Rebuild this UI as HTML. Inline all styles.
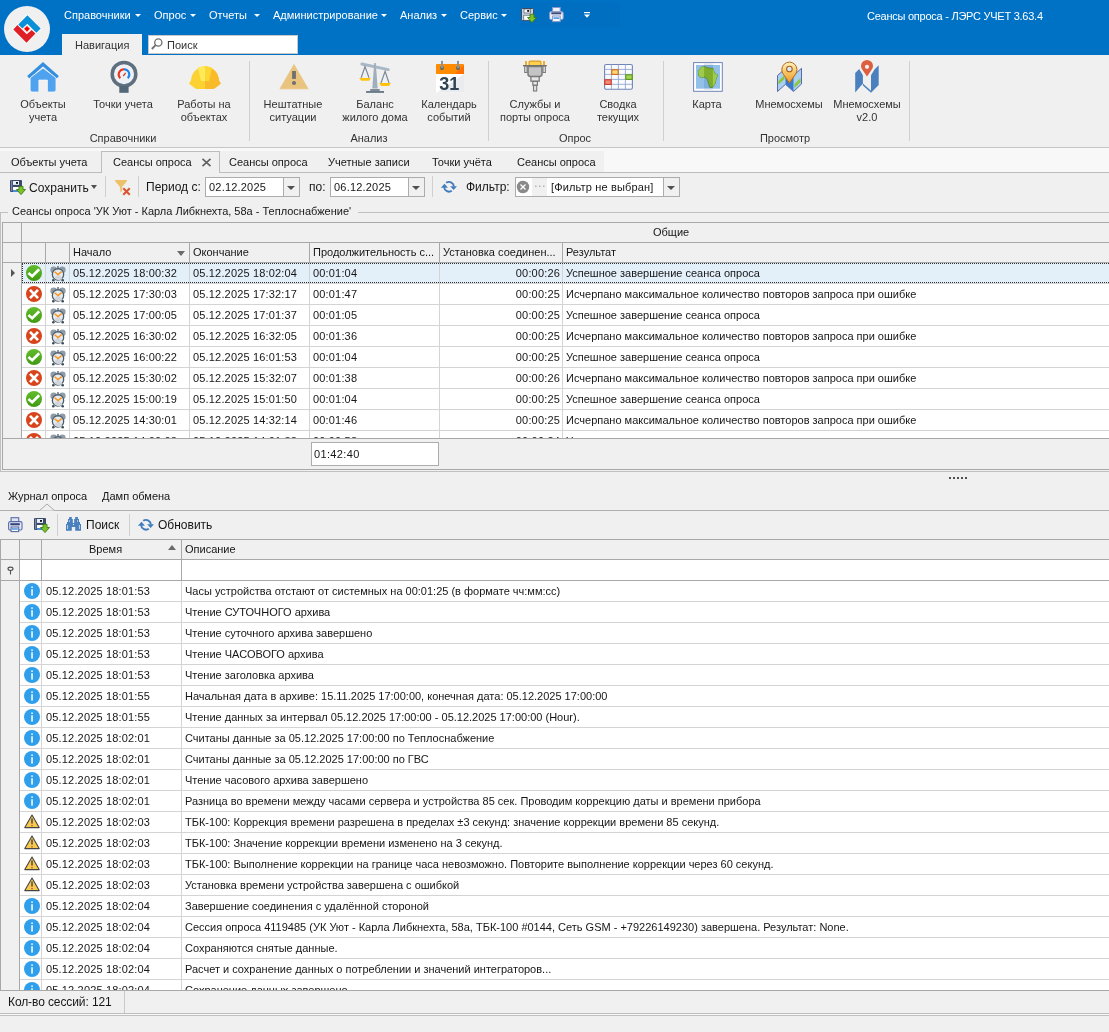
<!DOCTYPE html><html><head><meta charset="utf-8"><style>
*{margin:0;padding:0;box-sizing:border-box}
html,body{width:1109px;height:1032px;overflow:hidden;background:#f0f0f0;font-family:"Liberation Sans",sans-serif;font-size:11px;color:#161616}
.a{position:absolute}
.t{position:absolute;white-space:nowrap;line-height:13px}
.dg{letter-spacing:0.17px}
.mn{color:#fff;top:9px}
.ar{position:absolute;width:0;height:0;border-left:3px solid transparent;border-right:3px solid transparent;border-top:3px solid #fff}
.ard{position:absolute;width:0;height:0;border-left:4px solid transparent;border-right:4px solid transparent;border-top:4px solid #505050}
.rb{text-align:center;color:#333}
.sep{position:absolute;width:1px;background:#d0d0d0}
.hl{position:absolute;height:1px}
.vl{position:absolute;width:1px}
.ic{position:absolute}
</style></head><body><div id="root" style="position:absolute;left:0;top:0;width:1109px;height:1032px;will-change:transform">
<div class="a" style="left:0;top:0;width:1109px;height:55px;background:#0072c6"></div>
<div class="a" style="left:520px;top:2px;width:100px;height:25px;background:#006fc1"></div>
<div class="a" style="left:4px;top:6px;width:46px;height:46px;border-radius:50%;background:#f0f0f0"></div>
<svg class="a" style="left:0;top:0" width="60" height="60" viewBox="0 0 60 60">
<polygon points="18.3,24.4 27.4,15.2 40.7,28.5 36.3,32.8 27.3,23.8 22.4,28.5" fill="#fff" stroke="#fff" stroke-width="1.6" stroke-linejoin="round"/>
<polygon points="13.3,29.4 26.5,42.7 35.5,33.4 31.7,29.9 26.7,34.3 17.4,25" fill="#fff" stroke="#fff" stroke-width="1.6" stroke-linejoin="round"/>
<polygon points="18.3,24.4 27.4,15.2 40.7,28.5 36.3,32.8 27.3,23.8 22.4,28.5" fill="#0a90d6"/>
<polygon points="13.3,29.4 26.5,42.7 35.5,33.4 31.7,29.9 26.7,34.3 17.4,25" fill="#e01e26"/>
<polygon points="27,25.9 29.9,28.8 27,31.7 24.1,28.8" fill="#f00"/>
</svg>
<div class="t mn" style="left:64px">Справочники</div><div class="ar" style="left:135px;top:14px"></div>
<div class="t mn" style="left:154px">Опрос</div><div class="ar" style="left:190px;top:14px"></div>
<div class="t mn" style="left:209px">Отчеты</div><div class="ar" style="left:254px;top:14px"></div>
<div class="t mn" style="left:273px">Администрирование</div><div class="ar" style="left:381px;top:14px"></div>
<div class="t mn" style="left:400px">Анализ</div><div class="ar" style="left:441px;top:14px"></div>
<div class="t mn" style="left:460px">Сервис</div><div class="ar" style="left:501px;top:14px"></div>
<div class="t mn" style="left:867px;top:10px;letter-spacing:-0.25px">Сеансы опроса - ЛЭРС УЧЕТ 3.63.4</div>
<div class="a" style="left:62px;top:34px;width:80px;height:21px;background:#f0f0f0"></div>
<div class="t" style="left:75px;top:39px;color:#333">Навигация</div>
<div class="a" style="left:148px;top:35px;width:150px;height:19px;background:#fff;border:1px solid #c8c8c8"></div>
<div class="t" style="left:167px;top:39px;color:#333">Поиск</div>
<div class="t rb" style="left:-2px;top:98px;width:90px">Объекты<br>учета</div>
<div class="t rb" style="left:78px;top:98px;width:90px">Точки учета</div>
<div class="t rb" style="left:159px;top:98px;width:90px">Работы на<br>объектах</div>
<div class="t rb" style="left:248px;top:98px;width:90px">Нештатные<br>ситуации</div>
<div class="t rb" style="left:330px;top:98px;width:90px">Баланс<br>жилого дома</div>
<div class="t rb" style="left:404px;top:98px;width:90px">Календарь<br>событий</div>
<div class="t rb" style="left:490px;top:98px;width:90px">Службы и<br>порты опроса</div>
<div class="t rb" style="left:573px;top:98px;width:90px">Сводка<br>текущих</div>
<div class="t rb" style="left:662px;top:98px;width:90px">Карта</div>
<div class="t rb" style="left:744px;top:98px;width:90px">Мнемосхемы</div>
<div class="t rb" style="left:822px;top:98px;width:90px">Мнемосхемы<br>v2.0</div>
<div class="t rb" style="left:78px;top:132px;width:90px">Справочники</div>
<div class="t rb" style="left:324px;top:132px;width:90px">Анализ</div>
<div class="t rb" style="left:530px;top:132px;width:90px">Опрос</div>
<div class="t rb" style="left:740px;top:132px;width:90px">Просмотр</div>
<div class="sep" style="left:249px;top:61px;height:80px"></div>
<div class="sep" style="left:488px;top:61px;height:80px"></div>
<div class="sep" style="left:663px;top:61px;height:80px"></div>
<div class="sep" style="left:909px;top:61px;height:80px"></div>
<div class="hl" style="left:0;top:147px;width:1109px;background:#c6c6c6"></div>
<div class="a" style="left:0;top:148px;width:1109px;height:24px;background:#f8f8f8"></div>
<div class="a" style="left:0;top:151px;width:604px;height:21px;background:#f0f0f0"></div>
<div class="hl" style="left:0;top:172px;width:1109px;background:#bdbdbd"></div>
<div class="a" style="left:101px;top:151px;width:119px;height:22px;background:#f0f0f0;border:1px solid #bdbdbd;border-bottom:none"></div>
<div class="t" style="left:11px;top:156px">Объекты учета</div>
<div class="t" style="left:113px;top:156px">Сеансы опроса</div>
<div class="t" style="left:229px;top:156px">Сеансы опроса</div>
<div class="t" style="left:328px;top:156px">Учетные записи</div>
<div class="t" style="left:432px;top:156px">Точки учёта</div>
<div class="t" style="left:517px;top:156px">Сеансы опроса</div>
<svg class="ic" style="left:201px;top:158px" width="11" height="9"><path d="M1.5 0.8 L9.5 8.2 M9.5 0.8 L1.5 8.2" stroke="#606060" stroke-width="1.6"/></svg>
<div class="t" style="left:29px;top:182px;font-size:12px">Сохранить</div><div class="ard" style="left:91px;top:185px;border-width:4px 3px 0 3px"></div>
<div class="sep" style="left:105px;top:176px;height:21px"></div>
<div class="sep" style="left:138px;top:176px;height:21px"></div>
<div class="t" style="left:146px;top:181px;font-size:12px">Период с:</div>
<div class="a" style="left:205px;top:177px;width:95px;height:20px;background:#fff;border:1px solid #acacac"></div>
<div class="a" style="left:283px;top:178px;width:16px;height:18px;background:#f0f0f0;border-left:1px solid #acacac"></div>
<div class="ard" style="left:287px;top:186px"></div>
<div class="t" style="left:209px;top:181px;letter-spacing:0.2px">02.12.2025</div>
<div class="t" style="left:309px;top:181px;font-size:12px">по:</div>
<div class="a" style="left:330px;top:177px;width:95px;height:20px;background:#fff;border:1px solid #acacac"></div>
<div class="a" style="left:408px;top:178px;width:16px;height:18px;background:#f0f0f0;border-left:1px solid #acacac"></div>
<div class="ard" style="left:412px;top:186px"></div>
<div class="t" style="left:334px;top:181px;letter-spacing:0.2px">06.12.2025</div>
<div class="sep" style="left:432px;top:176px;height:21px"></div>
<div class="t" style="left:466px;top:181px;font-size:12px">Фильтр:</div>
<div class="a" style="left:515px;top:177px;width:165px;height:20px;background:#fff;border:1px solid #acacac"></div>
<div class="a" style="left:532px;top:178px;width:15px;height:18px;background:#f0f0f0"></div>
<div class="a" style="left:663px;top:178px;width:16px;height:18px;background:#f0f0f0;border-left:1px solid #acacac"></div>
<div class="ard" style="left:667px;top:186px"></div>
<div class="t" style="left:551px;top:181px;letter-spacing:0.15px">[Фильтр не выбран]</div>
<div class="a" style="left:0;top:212px;width:1109px;height:260px;border:1px solid #c0c0c0;border-right:none"></div>
<div class="a" style="left:8px;top:205px;width:350px;height:14px;background:#f0f0f0"></div>
<div class="t" style="left:12px;top:205px">Сеансы опроса 'УК Уют - Карла Либкнехта, 58а - Теплоснабжение'</div>
<div class="a" style="left:2px;top:222px;width:1107px;height:248px;border:1px solid #a8a8a8;border-right:none;background:#f0f0f0"></div>
<div class="hl" style="left:2px;top:242px;width:1107px;background:#a8a8a8"></div>
<div class="hl" style="left:2px;top:262px;width:1107px;background:#a8a8a8"></div>
<div class="vl" style="left:21px;top:222px;height:216px;background:#a8a8a8"></div>
<div class="vl" style="left:45px;top:242px;height:20px;background:#a8a8a8"></div>
<div class="vl" style="left:69px;top:242px;height:20px;background:#a8a8a8"></div>
<div class="vl" style="left:189px;top:242px;height:20px;background:#a8a8a8"></div>
<div class="vl" style="left:309px;top:242px;height:20px;background:#a8a8a8"></div>
<div class="vl" style="left:439px;top:242px;height:20px;background:#a8a8a8"></div>
<div class="vl" style="left:562px;top:242px;height:20px;background:#a8a8a8"></div>
<div class="t" style="left:653px;top:226px">Общие</div>
<div class="t" style="left:73px;top:246px">Начало</div>
<div class="t" style="left:193px;top:246px">Окончание</div>
<div class="t" style="left:313px;top:246px">Продолжительность с...</div>
<div class="t" style="left:443px;top:246px">Установка соединен...</div>
<div class="t" style="left:566px;top:246px">Результат</div>
<div class="ard" style="left:177px;top:251px;border-width:5px 4px 0 4px;border-top-color:#6a6a6a"></div>
<div class="a" style="left:22px;top:263px;width:1087px;height:175px;background:#fff"></div>
<div class="a" style="left:22px;top:263px;width:1087px;height:20px;background:#e3eff9"></div>
<div class="a" style="left:22px;top:263px;width:1087px;height:175px;overflow:hidden">
<div class="hl" style="left:0;top:20px;width:1087px;background:#d4d4d4"></div>
<div class="vl" style="left:23px;top:0px;height:20px;background:#d4d4d4"></div>
<div class="vl" style="left:47px;top:0px;height:20px;background:#d4d4d4"></div>
<div class="vl" style="left:167px;top:0px;height:20px;background:#d4d4d4"></div>
<div class="vl" style="left:287px;top:0px;height:20px;background:#d4d4d4"></div>
<div class="vl" style="left:417px;top:0px;height:20px;background:#d4d4d4"></div>
<div class="vl" style="left:540px;top:0px;height:20px;background:#d4d4d4"></div>
<svg class="ic" style="left:4px;top:2px" width="16" height="16"><use href="#ok"/></svg>
<svg class="ic" style="left:28px;top:3px" width="16" height="16"><use href="#clk"/></svg>
<div class="t dg" style="left:51px;top:4px">05.12.2025 18:00:32</div>
<div class="t dg" style="left:171px;top:4px">05.12.2025 18:02:04</div>
<div class="t dg" style="left:291px;top:4px">00:01:04</div>
<div class="t dg" style="left:438px;top:4px;width:100px;text-align:right">00:00:26</div>
<div class="t" style="left:544px;top:4px">Успешное завершение сеанса опроса</div>
<div class="hl" style="left:0;top:41px;width:1087px;background:#d4d4d4"></div>
<div class="vl" style="left:23px;top:21px;height:20px;background:#d4d4d4"></div>
<div class="vl" style="left:47px;top:21px;height:20px;background:#d4d4d4"></div>
<div class="vl" style="left:167px;top:21px;height:20px;background:#d4d4d4"></div>
<div class="vl" style="left:287px;top:21px;height:20px;background:#d4d4d4"></div>
<div class="vl" style="left:417px;top:21px;height:20px;background:#d4d4d4"></div>
<div class="vl" style="left:540px;top:21px;height:20px;background:#d4d4d4"></div>
<svg class="ic" style="left:4px;top:23px" width="16" height="16"><use href="#er"/></svg>
<svg class="ic" style="left:28px;top:24px" width="16" height="16"><use href="#clk"/></svg>
<div class="t dg" style="left:51px;top:25px">05.12.2025 17:30:03</div>
<div class="t dg" style="left:171px;top:25px">05.12.2025 17:32:17</div>
<div class="t dg" style="left:291px;top:25px">00:01:47</div>
<div class="t dg" style="left:438px;top:25px;width:100px;text-align:right">00:00:25</div>
<div class="t" style="left:544px;top:25px">Исчерпано максимальное количество повторов запроса при ошибке</div>
<div class="hl" style="left:0;top:62px;width:1087px;background:#d4d4d4"></div>
<div class="vl" style="left:23px;top:42px;height:20px;background:#d4d4d4"></div>
<div class="vl" style="left:47px;top:42px;height:20px;background:#d4d4d4"></div>
<div class="vl" style="left:167px;top:42px;height:20px;background:#d4d4d4"></div>
<div class="vl" style="left:287px;top:42px;height:20px;background:#d4d4d4"></div>
<div class="vl" style="left:417px;top:42px;height:20px;background:#d4d4d4"></div>
<div class="vl" style="left:540px;top:42px;height:20px;background:#d4d4d4"></div>
<svg class="ic" style="left:4px;top:44px" width="16" height="16"><use href="#ok"/></svg>
<svg class="ic" style="left:28px;top:45px" width="16" height="16"><use href="#clk"/></svg>
<div class="t dg" style="left:51px;top:46px">05.12.2025 17:00:05</div>
<div class="t dg" style="left:171px;top:46px">05.12.2025 17:01:37</div>
<div class="t dg" style="left:291px;top:46px">00:01:05</div>
<div class="t dg" style="left:438px;top:46px;width:100px;text-align:right">00:00:25</div>
<div class="t" style="left:544px;top:46px">Успешное завершение сеанса опроса</div>
<div class="hl" style="left:0;top:83px;width:1087px;background:#d4d4d4"></div>
<div class="vl" style="left:23px;top:63px;height:20px;background:#d4d4d4"></div>
<div class="vl" style="left:47px;top:63px;height:20px;background:#d4d4d4"></div>
<div class="vl" style="left:167px;top:63px;height:20px;background:#d4d4d4"></div>
<div class="vl" style="left:287px;top:63px;height:20px;background:#d4d4d4"></div>
<div class="vl" style="left:417px;top:63px;height:20px;background:#d4d4d4"></div>
<div class="vl" style="left:540px;top:63px;height:20px;background:#d4d4d4"></div>
<svg class="ic" style="left:4px;top:65px" width="16" height="16"><use href="#er"/></svg>
<svg class="ic" style="left:28px;top:66px" width="16" height="16"><use href="#clk"/></svg>
<div class="t dg" style="left:51px;top:67px">05.12.2025 16:30:02</div>
<div class="t dg" style="left:171px;top:67px">05.12.2025 16:32:05</div>
<div class="t dg" style="left:291px;top:67px">00:01:36</div>
<div class="t dg" style="left:438px;top:67px;width:100px;text-align:right">00:00:25</div>
<div class="t" style="left:544px;top:67px">Исчерпано максимальное количество повторов запроса при ошибке</div>
<div class="hl" style="left:0;top:104px;width:1087px;background:#d4d4d4"></div>
<div class="vl" style="left:23px;top:84px;height:20px;background:#d4d4d4"></div>
<div class="vl" style="left:47px;top:84px;height:20px;background:#d4d4d4"></div>
<div class="vl" style="left:167px;top:84px;height:20px;background:#d4d4d4"></div>
<div class="vl" style="left:287px;top:84px;height:20px;background:#d4d4d4"></div>
<div class="vl" style="left:417px;top:84px;height:20px;background:#d4d4d4"></div>
<div class="vl" style="left:540px;top:84px;height:20px;background:#d4d4d4"></div>
<svg class="ic" style="left:4px;top:86px" width="16" height="16"><use href="#ok"/></svg>
<svg class="ic" style="left:28px;top:87px" width="16" height="16"><use href="#clk"/></svg>
<div class="t dg" style="left:51px;top:88px">05.12.2025 16:00:22</div>
<div class="t dg" style="left:171px;top:88px">05.12.2025 16:01:53</div>
<div class="t dg" style="left:291px;top:88px">00:01:04</div>
<div class="t dg" style="left:438px;top:88px;width:100px;text-align:right">00:00:25</div>
<div class="t" style="left:544px;top:88px">Успешное завершение сеанса опроса</div>
<div class="hl" style="left:0;top:125px;width:1087px;background:#d4d4d4"></div>
<div class="vl" style="left:23px;top:105px;height:20px;background:#d4d4d4"></div>
<div class="vl" style="left:47px;top:105px;height:20px;background:#d4d4d4"></div>
<div class="vl" style="left:167px;top:105px;height:20px;background:#d4d4d4"></div>
<div class="vl" style="left:287px;top:105px;height:20px;background:#d4d4d4"></div>
<div class="vl" style="left:417px;top:105px;height:20px;background:#d4d4d4"></div>
<div class="vl" style="left:540px;top:105px;height:20px;background:#d4d4d4"></div>
<svg class="ic" style="left:4px;top:107px" width="16" height="16"><use href="#er"/></svg>
<svg class="ic" style="left:28px;top:108px" width="16" height="16"><use href="#clk"/></svg>
<div class="t dg" style="left:51px;top:109px">05.12.2025 15:30:02</div>
<div class="t dg" style="left:171px;top:109px">05.12.2025 15:32:07</div>
<div class="t dg" style="left:291px;top:109px">00:01:38</div>
<div class="t dg" style="left:438px;top:109px;width:100px;text-align:right">00:00:26</div>
<div class="t" style="left:544px;top:109px">Исчерпано максимальное количество повторов запроса при ошибке</div>
<div class="hl" style="left:0;top:146px;width:1087px;background:#d4d4d4"></div>
<div class="vl" style="left:23px;top:126px;height:20px;background:#d4d4d4"></div>
<div class="vl" style="left:47px;top:126px;height:20px;background:#d4d4d4"></div>
<div class="vl" style="left:167px;top:126px;height:20px;background:#d4d4d4"></div>
<div class="vl" style="left:287px;top:126px;height:20px;background:#d4d4d4"></div>
<div class="vl" style="left:417px;top:126px;height:20px;background:#d4d4d4"></div>
<div class="vl" style="left:540px;top:126px;height:20px;background:#d4d4d4"></div>
<svg class="ic" style="left:4px;top:128px" width="16" height="16"><use href="#ok"/></svg>
<svg class="ic" style="left:28px;top:129px" width="16" height="16"><use href="#clk"/></svg>
<div class="t dg" style="left:51px;top:130px">05.12.2025 15:00:19</div>
<div class="t dg" style="left:171px;top:130px">05.12.2025 15:01:50</div>
<div class="t dg" style="left:291px;top:130px">00:01:04</div>
<div class="t dg" style="left:438px;top:130px;width:100px;text-align:right">00:00:25</div>
<div class="t" style="left:544px;top:130px">Успешное завершение сеанса опроса</div>
<div class="hl" style="left:0;top:167px;width:1087px;background:#d4d4d4"></div>
<div class="vl" style="left:23px;top:147px;height:20px;background:#d4d4d4"></div>
<div class="vl" style="left:47px;top:147px;height:20px;background:#d4d4d4"></div>
<div class="vl" style="left:167px;top:147px;height:20px;background:#d4d4d4"></div>
<div class="vl" style="left:287px;top:147px;height:20px;background:#d4d4d4"></div>
<div class="vl" style="left:417px;top:147px;height:20px;background:#d4d4d4"></div>
<div class="vl" style="left:540px;top:147px;height:20px;background:#d4d4d4"></div>
<svg class="ic" style="left:4px;top:149px" width="16" height="16"><use href="#er"/></svg>
<svg class="ic" style="left:28px;top:150px" width="16" height="16"><use href="#clk"/></svg>
<div class="t dg" style="left:51px;top:151px">05.12.2025 14:30:01</div>
<div class="t dg" style="left:171px;top:151px">05.12.2025 14:32:14</div>
<div class="t dg" style="left:291px;top:151px">00:01:46</div>
<div class="t dg" style="left:438px;top:151px;width:100px;text-align:right">00:00:25</div>
<div class="t" style="left:544px;top:151px">Исчерпано максимальное количество повторов запроса при ошибке</div>
<div class="hl" style="left:0;top:188px;width:1087px;background:#d4d4d4"></div>
<div class="vl" style="left:23px;top:168px;height:20px;background:#d4d4d4"></div>
<div class="vl" style="left:47px;top:168px;height:20px;background:#d4d4d4"></div>
<div class="vl" style="left:167px;top:168px;height:20px;background:#d4d4d4"></div>
<div class="vl" style="left:287px;top:168px;height:20px;background:#d4d4d4"></div>
<div class="vl" style="left:417px;top:168px;height:20px;background:#d4d4d4"></div>
<div class="vl" style="left:540px;top:168px;height:20px;background:#d4d4d4"></div>
<svg class="ic" style="left:4px;top:170px" width="16" height="16"><use href="#er"/></svg>
<svg class="ic" style="left:28px;top:171px" width="16" height="16"><use href="#clk"/></svg>
<div class="t dg" style="left:51px;top:172px">05.12.2025 14:00:03</div>
<div class="t dg" style="left:171px;top:172px">05.12.2025 14:01:33</div>
<div class="t dg" style="left:291px;top:172px">00:00:58</div>
<div class="t dg" style="left:438px;top:172px;width:100px;text-align:right">00:00:24</div>
<div class="t" style="left:544px;top:172px">Успешное завершение сеанса опроса</div>
</div>
<div class="a" style="left:22px;top:263px;width:1087px;height:20px;border:1px dotted #303030;border-right:none"></div>
<div class="a" style="left:11px;top:269px;width:0;height:0;border-top:4px solid transparent;border-bottom:4px solid transparent;border-left:4px solid #555"></div>
<div class="hl" style="left:2px;top:438px;width:1107px;background:#a8a8a8"></div>
<div class="a" style="left:311px;top:442px;width:128px;height:24px;background:#fff;border:1px solid #acacac"></div>
<div class="t" style="left:314px;top:448px;letter-spacing:0.35px">01:42:40</div>
<svg class="ic" style="left:948px;top:476px" width="20" height="4"><rect x="1" y="1" width="2" height="2" fill="#505050"/><rect x="5" y="1" width="2" height="2" fill="#505050"/><rect x="9" y="1" width="2" height="2" fill="#505050"/><rect x="13" y="1" width="2" height="2" fill="#505050"/><rect x="17" y="1" width="2" height="2" fill="#505050"/></svg>
<div class="t" style="left:8px;top:490px">Журнал опроса</div>
<div class="t" style="left:102px;top:490px">Дамп обмена</div>
<div class="hl" style="left:0;top:510px;width:1109px;background:#b0b0b0"></div>
<svg class="ic" style="left:39px;top:503px" width="17" height="9"><path d="M0.5 7.5 L8 1 L15.5 7.5" fill="#f0f0f0" stroke="#a8a8a8" stroke-width="1"/></svg>
<div class="sep" style="left:57px;top:514px;height:22px"></div>
<div class="sep" style="left:129px;top:514px;height:22px"></div>
<div class="t" style="left:86px;top:519px;font-size:12px">Поиск</div>
<div class="t" style="left:158px;top:519px;font-size:12px">Обновить</div>
<div class="a" style="left:0;top:539px;width:1109px;height:452px;border:1px solid #a8a8a8;border-right:none;background:#fff"></div>
<div class="a" style="left:1px;top:540px;width:1108px;height:19px;background:#f0f0f0"></div>
<div class="a" style="left:1px;top:560px;width:18px;height:430px;background:#f0f0f0"></div>
<div class="hl" style="left:0;top:559px;width:1109px;background:#a8a8a8"></div>
<div class="hl" style="left:0;top:580px;width:1109px;background:#a8a8a8"></div>
<div class="vl" style="left:19px;top:539px;height:451px;background:#a8a8a8"></div>
<div class="vl" style="left:41px;top:539px;height:41px;background:#a8a8a8"></div>
<div class="vl" style="left:181px;top:539px;height:41px;background:#a8a8a8"></div>
<div class="t" style="left:89px;top:543px">Время</div>
<div class="t" style="left:185px;top:543px">Описание</div>
<div class="a" style="left:168px;top:545px;width:0;height:0;border-left:4px solid transparent;border-right:4px solid transparent;border-bottom:5px solid #6a6a6a"></div>
<div class="a" style="left:20px;top:581px;width:1089px;height:409px;overflow:hidden">
<div class="hl" style="left:0;top:20px;width:1089px;background:#d4d4d4"></div>
<div class="vl" style="left:21px;top:0px;height:20px;background:#d4d4d4"></div>
<div class="vl" style="left:161px;top:0px;height:20px;background:#d4d4d4"></div>
<svg class="ic" style="left:4px;top:2px" width="16" height="16"><use href="#i"/></svg>
<div class="t dg" style="left:26px;top:4px">05.12.2025 18:01:53</div>
<div class="t" style="left:165px;top:4px">Часы устройства отстают от системных на 00:01:25 (в формате чч:мм:сс)</div>
<div class="hl" style="left:0;top:41px;width:1089px;background:#d4d4d4"></div>
<div class="vl" style="left:21px;top:21px;height:20px;background:#d4d4d4"></div>
<div class="vl" style="left:161px;top:21px;height:20px;background:#d4d4d4"></div>
<svg class="ic" style="left:4px;top:23px" width="16" height="16"><use href="#i"/></svg>
<div class="t dg" style="left:26px;top:25px">05.12.2025 18:01:53</div>
<div class="t" style="left:165px;top:25px">Чтение СУТОЧНОГО архива</div>
<div class="hl" style="left:0;top:62px;width:1089px;background:#d4d4d4"></div>
<div class="vl" style="left:21px;top:42px;height:20px;background:#d4d4d4"></div>
<div class="vl" style="left:161px;top:42px;height:20px;background:#d4d4d4"></div>
<svg class="ic" style="left:4px;top:44px" width="16" height="16"><use href="#i"/></svg>
<div class="t dg" style="left:26px;top:46px">05.12.2025 18:01:53</div>
<div class="t" style="left:165px;top:46px">Чтение суточного архива завершено</div>
<div class="hl" style="left:0;top:83px;width:1089px;background:#d4d4d4"></div>
<div class="vl" style="left:21px;top:63px;height:20px;background:#d4d4d4"></div>
<div class="vl" style="left:161px;top:63px;height:20px;background:#d4d4d4"></div>
<svg class="ic" style="left:4px;top:65px" width="16" height="16"><use href="#i"/></svg>
<div class="t dg" style="left:26px;top:67px">05.12.2025 18:01:53</div>
<div class="t" style="left:165px;top:67px">Чтение ЧАСОВОГО архива</div>
<div class="hl" style="left:0;top:104px;width:1089px;background:#d4d4d4"></div>
<div class="vl" style="left:21px;top:84px;height:20px;background:#d4d4d4"></div>
<div class="vl" style="left:161px;top:84px;height:20px;background:#d4d4d4"></div>
<svg class="ic" style="left:4px;top:86px" width="16" height="16"><use href="#i"/></svg>
<div class="t dg" style="left:26px;top:88px">05.12.2025 18:01:53</div>
<div class="t" style="left:165px;top:88px">Чтение заголовка архива</div>
<div class="hl" style="left:0;top:125px;width:1089px;background:#d4d4d4"></div>
<div class="vl" style="left:21px;top:105px;height:20px;background:#d4d4d4"></div>
<div class="vl" style="left:161px;top:105px;height:20px;background:#d4d4d4"></div>
<svg class="ic" style="left:4px;top:107px" width="16" height="16"><use href="#i"/></svg>
<div class="t dg" style="left:26px;top:109px">05.12.2025 18:01:55</div>
<div class="t" style="left:165px;top:109px">Начальная дата в архиве: 15.11.2025 17:00:00, конечная дата: 05.12.2025 17:00:00</div>
<div class="hl" style="left:0;top:146px;width:1089px;background:#d4d4d4"></div>
<div class="vl" style="left:21px;top:126px;height:20px;background:#d4d4d4"></div>
<div class="vl" style="left:161px;top:126px;height:20px;background:#d4d4d4"></div>
<svg class="ic" style="left:4px;top:128px" width="16" height="16"><use href="#i"/></svg>
<div class="t dg" style="left:26px;top:130px">05.12.2025 18:01:55</div>
<div class="t" style="left:165px;top:130px">Чтение данных за интервал 05.12.2025 17:00:00 - 05.12.2025 17:00:00 (Hour).</div>
<div class="hl" style="left:0;top:167px;width:1089px;background:#d4d4d4"></div>
<div class="vl" style="left:21px;top:147px;height:20px;background:#d4d4d4"></div>
<div class="vl" style="left:161px;top:147px;height:20px;background:#d4d4d4"></div>
<svg class="ic" style="left:4px;top:149px" width="16" height="16"><use href="#i"/></svg>
<div class="t dg" style="left:26px;top:151px">05.12.2025 18:02:01</div>
<div class="t" style="left:165px;top:151px">Считаны данные за 05.12.2025 17:00:00 по Теплоснабжение</div>
<div class="hl" style="left:0;top:188px;width:1089px;background:#d4d4d4"></div>
<div class="vl" style="left:21px;top:168px;height:20px;background:#d4d4d4"></div>
<div class="vl" style="left:161px;top:168px;height:20px;background:#d4d4d4"></div>
<svg class="ic" style="left:4px;top:170px" width="16" height="16"><use href="#i"/></svg>
<div class="t dg" style="left:26px;top:172px">05.12.2025 18:02:01</div>
<div class="t" style="left:165px;top:172px">Считаны данные за 05.12.2025 17:00:00 по ГВС</div>
<div class="hl" style="left:0;top:209px;width:1089px;background:#d4d4d4"></div>
<div class="vl" style="left:21px;top:189px;height:20px;background:#d4d4d4"></div>
<div class="vl" style="left:161px;top:189px;height:20px;background:#d4d4d4"></div>
<svg class="ic" style="left:4px;top:191px" width="16" height="16"><use href="#i"/></svg>
<div class="t dg" style="left:26px;top:193px">05.12.2025 18:02:01</div>
<div class="t" style="left:165px;top:193px">Чтение часового архива завершено</div>
<div class="hl" style="left:0;top:230px;width:1089px;background:#d4d4d4"></div>
<div class="vl" style="left:21px;top:210px;height:20px;background:#d4d4d4"></div>
<div class="vl" style="left:161px;top:210px;height:20px;background:#d4d4d4"></div>
<svg class="ic" style="left:4px;top:212px" width="16" height="16"><use href="#i"/></svg>
<div class="t dg" style="left:26px;top:214px">05.12.2025 18:02:01</div>
<div class="t" style="left:165px;top:214px">Разница во времени между часами сервера и устройства 85 сек. Проводим коррекцию даты и времени прибора</div>
<div class="hl" style="left:0;top:251px;width:1089px;background:#d4d4d4"></div>
<div class="vl" style="left:21px;top:231px;height:20px;background:#d4d4d4"></div>
<div class="vl" style="left:161px;top:231px;height:20px;background:#d4d4d4"></div>
<svg class="ic" style="left:4px;top:233px" width="16" height="16"><use href="#w"/></svg>
<div class="t dg" style="left:26px;top:235px">05.12.2025 18:02:03</div>
<div class="t" style="left:165px;top:235px">ТБК-100: Коррекция времени разрешена в пределах ±3 секунд: значение коррекции времени 85 секунд.</div>
<div class="hl" style="left:0;top:272px;width:1089px;background:#d4d4d4"></div>
<div class="vl" style="left:21px;top:252px;height:20px;background:#d4d4d4"></div>
<div class="vl" style="left:161px;top:252px;height:20px;background:#d4d4d4"></div>
<svg class="ic" style="left:4px;top:254px" width="16" height="16"><use href="#w"/></svg>
<div class="t dg" style="left:26px;top:256px">05.12.2025 18:02:03</div>
<div class="t" style="left:165px;top:256px">ТБК-100: Значение коррекции времени изменено на 3 секунд.</div>
<div class="hl" style="left:0;top:293px;width:1089px;background:#d4d4d4"></div>
<div class="vl" style="left:21px;top:273px;height:20px;background:#d4d4d4"></div>
<div class="vl" style="left:161px;top:273px;height:20px;background:#d4d4d4"></div>
<svg class="ic" style="left:4px;top:275px" width="16" height="16"><use href="#w"/></svg>
<div class="t dg" style="left:26px;top:277px">05.12.2025 18:02:03</div>
<div class="t" style="left:165px;top:277px">ТБК-100: Выполнение коррекции на границе часа невозможно. Повторите выполнение коррекции через 60 секунд.</div>
<div class="hl" style="left:0;top:314px;width:1089px;background:#d4d4d4"></div>
<div class="vl" style="left:21px;top:294px;height:20px;background:#d4d4d4"></div>
<div class="vl" style="left:161px;top:294px;height:20px;background:#d4d4d4"></div>
<svg class="ic" style="left:4px;top:296px" width="16" height="16"><use href="#w"/></svg>
<div class="t dg" style="left:26px;top:298px">05.12.2025 18:02:03</div>
<div class="t" style="left:165px;top:298px">Установка времени устройства завершена с ошибкой</div>
<div class="hl" style="left:0;top:335px;width:1089px;background:#d4d4d4"></div>
<div class="vl" style="left:21px;top:315px;height:20px;background:#d4d4d4"></div>
<div class="vl" style="left:161px;top:315px;height:20px;background:#d4d4d4"></div>
<svg class="ic" style="left:4px;top:317px" width="16" height="16"><use href="#i"/></svg>
<div class="t dg" style="left:26px;top:319px">05.12.2025 18:02:04</div>
<div class="t" style="left:165px;top:319px">Завершение соединения с удалённой стороной</div>
<div class="hl" style="left:0;top:356px;width:1089px;background:#d4d4d4"></div>
<div class="vl" style="left:21px;top:336px;height:20px;background:#d4d4d4"></div>
<div class="vl" style="left:161px;top:336px;height:20px;background:#d4d4d4"></div>
<svg class="ic" style="left:4px;top:338px" width="16" height="16"><use href="#i"/></svg>
<div class="t dg" style="left:26px;top:340px">05.12.2025 18:02:04</div>
<div class="t" style="left:165px;top:340px">Сессия опроса 4119485 (УК Уют - Карла Либкнехта, 58а, ТБК-100 #0144, Сеть GSM - +79226149230) завершена. Результат: None.</div>
<div class="hl" style="left:0;top:377px;width:1089px;background:#d4d4d4"></div>
<div class="vl" style="left:21px;top:357px;height:20px;background:#d4d4d4"></div>
<div class="vl" style="left:161px;top:357px;height:20px;background:#d4d4d4"></div>
<svg class="ic" style="left:4px;top:359px" width="16" height="16"><use href="#i"/></svg>
<div class="t dg" style="left:26px;top:361px">05.12.2025 18:02:04</div>
<div class="t" style="left:165px;top:361px">Сохраняются снятые данные.</div>
<div class="hl" style="left:0;top:398px;width:1089px;background:#d4d4d4"></div>
<div class="vl" style="left:21px;top:378px;height:20px;background:#d4d4d4"></div>
<div class="vl" style="left:161px;top:378px;height:20px;background:#d4d4d4"></div>
<svg class="ic" style="left:4px;top:380px" width="16" height="16"><use href="#i"/></svg>
<div class="t dg" style="left:26px;top:382px">05.12.2025 18:02:04</div>
<div class="t" style="left:165px;top:382px">Расчет и сохранение данных о потреблении и значений интеграторов...</div>
<div class="hl" style="left:0;top:419px;width:1089px;background:#d4d4d4"></div>
<div class="vl" style="left:21px;top:399px;height:20px;background:#d4d4d4"></div>
<div class="vl" style="left:161px;top:399px;height:20px;background:#d4d4d4"></div>
<svg class="ic" style="left:4px;top:401px" width="16" height="16"><use href="#i"/></svg>
<div class="t dg" style="left:26px;top:403px">05.12.2025 18:02:04</div>
<div class="t" style="left:165px;top:403px">Сохранение данных завершено</div>
</div>
<div class="hl" style="left:0;top:990px;width:1109px;background:#a8a8a8"></div>
<div class="t" style="left:8px;top:996px;font-size:12px;letter-spacing:-0.1px">Кол-во сессий: 121</div>
<div class="vl" style="left:124px;top:991px;height:22px;background:#c8c8c8"></div>
<div class="hl" style="left:0;top:1013px;width:1109px;background:#bebebe"></div>
<div class="hl" style="left:0;top:1014px;width:1109px;background:#f8f8f8"></div>
<div class="hl" style="left:0;top:1015px;width:1109px;background:#c0c0c0"></div>
<svg class="ic" style="left:27px;top:61px" width="32" height="32" viewBox="0 0 32 32"><path d="M1.2 16.2 L16 3.2 L30.8 16.2" fill="none" stroke="#358fe0" stroke-width="3.2" stroke-linejoin="miter"/><path d="M3.1 16.8 L16 7 L29 16.8 L29 29 Q29 31 27 31 L20.4 31 L20.4 19.1 L11.9 19.1 L11.9 31 L5.1 31 Q3.1 31 3.1 29 Z" fill="#4fa3ee" stroke="#f8f8f8" stroke-width="0.8"/></svg>
<svg class="ic" style="left:106px;top:58px" width="36" height="38" viewBox="0 0 36 38"><circle cx="18" cy="16.2" r="11.8" fill="#eef2f6" stroke="#5f6f7e" stroke-width="3.5"/><rect x="13.3" y="28" width="9.3" height="6.8" fill="#546778"/><path d="M14.25 20.25 A5.3 5.3 0 0 1 18 11.2" fill="none" stroke="#e8341c" stroke-width="2"/><path d="M18 11.2 A5.3 5.3 0 0 1 21.75 20.25" fill="none" stroke="#1a82e8" stroke-width="2"/><path d="M17.2 18 L19.7 14.9" stroke="#d04030" stroke-width="1.3"/></svg>
<svg class="ic" style="left:186px;top:60px" width="38" height="34" viewBox="0 0 38 34"><path d="M5 21 A14 14.6 0 0 1 33 21 Z" fill="#fcd232"/><path d="M19 6.4 A14 14.6 0 0 1 33 21 L19 21 Z" fill="#f9bb2a"/><path d="M3 23.6 L5 20.3 L19 20.3 L19 29 L10.3 29 Q8 28 3 23.6 Z" fill="#fcd232"/><path d="M35 23.6 L33 20.3 L19 20.3 L19 29 L27.7 29 Q30 28 35 23.6 Z" fill="#f9bb2a"/><path d="M12 7.6 Q19 5.4 26 7.6 L23 21 L15 21 Z" fill="#fdd835"/><path d="M12 7.6 Q15 6.5 19 6.3 L19 21 L15 21 Z" fill="#ffea5a"/></svg>
<svg class="ic" style="left:276px;top:60px" width="36" height="34" viewBox="0 0 36 34"><path d="M18 4.6 L32.1 28.8 L4 28.8 Z" fill="#e8c47e" stroke="#e8c47e" stroke-width="0.8" stroke-linejoin="round"/><rect x="16.1" y="11" width="3.8" height="7.9" fill="#6f6f72"/><circle cx="18" cy="22.9" r="2" fill="#6f6f72"/></svg>
<svg class="ic" style="left:356px;top:58px" width="38" height="38" viewBox="0 0 38 38"><path d="M5.8 6 L32.2 11.6" stroke="#aab8c6" stroke-width="2.9" stroke-linecap="round"/><path d="M18.2 5 L19.8 5 L21.7 30.6 L16.3 30.6 Z" fill="#a0afbd"/><rect x="14.2" y="31" width="9.5" height="2" fill="#7e8c98"/><rect x="10.1" y="33" width="17.9" height="1.9" fill="#6a7a88"/><path d="M5.2 19.8 L9 8.5 L13 19.8 M25 25 L29.1 13.3 L33 25" fill="none" stroke="#7a8a98" stroke-width="1.2"/><path d="M3.1 19.9 L14.9 19.9 L13 22.8 L5.2 22.8 Z M23 25 L35 25 L33 28 L25 28 Z" fill="#ffc20e"/></svg>
<svg class="ic" style="left:432px;top:58px" width="36" height="38" viewBox="0 0 36 38"><rect x="4" y="16" width="28" height="18.6" fill="#fff"/><path d="M32 16 L32 34.6 L5 34.6 Z" fill="#e9ebee"/><path d="M4 7 Q4 5.9 5 5.9 L31 5.9 Q32 5.9 32 7 L32 16 L4 16 Z" fill="#ff8c00"/><path d="M23 16 L32 7 L32 16 Z" fill="#ff6e00"/><circle cx="10" cy="10" r="1.9" fill="#4a6070"/><circle cx="26" cy="10" r="1.9" fill="#4a6070"/><rect x="9" y="2.9" width="2" height="7.5" fill="#7e96a8"/><rect x="25" y="2.9" width="2" height="7.5" fill="#7e96a8"/><text x="17.3" y="32" text-anchor="middle" font-family="Liberation Sans" font-weight="bold" font-size="18" fill="#2e4450">31</text></svg>
<svg class="ic" style="left:517px;top:58px" width="36" height="38" viewBox="0 0 36 38"><rect x="12.1" y="3.1" width="11.8" height="4.6" rx="1" fill="#ffd24a" stroke="#e09a2a" stroke-width="1.2"/><rect x="8" y="3" width="2" height="4.5" fill="#f0b020"/><rect x="26" y="3" width="2" height="4.5" fill="#f0b020"/><rect x="6" y="7" width="23.8" height="1.4" fill="#6d6d6d"/><rect x="7.7" y="8.2" width="2.4" height="6.3" fill="#e0e0e0" stroke="#7a7a7a" stroke-width="1"/><rect x="26" y="8.2" width="2.4" height="6.3" fill="#e0e0e0" stroke="#7a7a7a" stroke-width="1"/><path d="M11 8.4 L25 8.4 L25 16 Q25 18.4 22.6 18.4 L13.4 18.4 Q11 18.4 11 16 Z" fill="#c4c4c6" stroke="#7a7a7a" stroke-width="1.5"/><rect x="13.9" y="18.6" width="8.3" height="4.6" fill="#e6e6e6" stroke="#7a7a7a" stroke-width="1.3"/><rect x="15.8" y="23.4" width="4.6" height="3.8" fill="#e6e6e6" stroke="#7a7a7a" stroke-width="1.2"/><rect x="16.5" y="27.4" width="3.2" height="5.6" fill="#e0e0e0" stroke="#7a7a7a" stroke-width="1.1"/></svg>
<svg class="ic" style="left:600px;top:58px" width="38" height="38" viewBox="0 0 38 38"><rect x="4.6" y="6.5" width="27.8" height="24.8" rx="1.6" fill="#fafbfe" stroke="#6f85b8" stroke-width="1.1"/><path d="M11.4 6.5 V31.3 M18.4 6.5 V31.3 M25.4 6.5 V31.3 M4.6 11.4 H32.4 M4.6 16.4 H32.4 M4.6 21.4 H32.4 M4.6 26.3 H32.4" stroke="#94a6cf" stroke-width="0.9"/><rect x="11.8" y="11.8" width="6.4" height="4.6" fill="#f9d77c" stroke="#d06a10" stroke-width="1.1"/><rect x="25.8" y="16.8" width="6.4" height="4.6" fill="#a4d45a" stroke="#5a9a10" stroke-width="1.1"/><rect x="4.8" y="21.8" width="6.4" height="4.6" fill="#f58a72" stroke="#cc3a2a" stroke-width="1.1"/></svg>
<svg class="ic" style="left:689px;top:58px" width="38" height="38" viewBox="0 0 38 38"><defs><clipPath id="afl"><rect x="0" y="0" width="15.1" height="38"/><rect x="23.9" y="0" width="15" height="38"/></clipPath></defs><rect x="4.6" y="4.6" width="28.7" height="28.7" fill="#fff" stroke="#6f84b8" stroke-width="1"/><rect x="7" y="7" width="24" height="23.7" fill="#93c0e8"/><rect x="15.1" y="7" width="8.8" height="23.7" fill="#6a9ed2" opacity="0.5"/><rect x="15.1" y="5" width="8.8" height="2" fill="#e4e8ee"/><rect x="15.1" y="30.7" width="8.8" height="2.2" fill="#e4e8ee"/><path d="M15 8.2 L19 10 L24 10.3 L25.4 15 L28.8 17 L27 21 L26.4 25 L23.6 29.3 L21 29.6 L19.8 26 L18.4 21.5 L16 19.2 L12.4 19.6 L9.6 17.6 L9.3 13 L12 9.5 Z" fill="#7fae2e" stroke="#4d7a18" stroke-width="0.7"/><path d="M15 8.2 L19 10 L24 10.3 L25.4 15 L28.8 17 L27 21 L26.4 25 L23.6 29.3 L21 29.6 L19.8 26 L18.4 21.5 L16 19.2 L12.4 19.6 L9.6 17.6 L9.3 13 L12 9.5 Z" fill="#9ccb50" clip-path="url(#afl)"/></svg>
<svg class="ic" style="left:771px;top:58px" width="38" height="38" viewBox="0 0 38 38"><path d="M6.5 17.5 L14.5 10.5 L22.5 17.5 L30.5 10.3 L30.5 26 L22.5 33.5 L14.5 26.3 L6.5 33.5 Z" fill="#a9d0ee" stroke="#5a6aa8" stroke-width="1"/><path d="M14.5 10.5 L22.5 17.5 L22.5 33.5 L14.5 26.3 Z" fill="#3a7ac8"/><path d="M7.5 23 L13.5 17 L13.5 21 L7.5 26.5 Z M23.5 30 L29.5 24 L29.5 20 L23.5 26 Z" fill="#8cc63f"/><defs><linearGradient id="gpin" x1="0" y1="0" x2="0" y2="1"><stop offset="0" stop-color="#fff4c0"/><stop offset="0.45" stop-color="#f8c868"/><stop offset="1" stop-color="#f09a28"/></linearGradient></defs><path d="M18.4 25 L12.5 16.5 A7.6 7.6 0 1 1 24.3 16.5 Z" fill="url(#gpin)" stroke="#b06a20" stroke-width="1"/><circle cx="18.4" cy="11" r="2.8" fill="#dde8f5" stroke="#a06020" stroke-width="1.1"/></svg>
<svg class="ic" style="left:848px;top:58px" width="38" height="38" viewBox="0 0 38 38"><path d="M7.2 15.1 L11.2 11 L14.9 17.3 L14.9 25.4 L7.2 34.6 Z" fill="#4a80bd"/><path d="M23 17.3 L26.5 11.4 L30.7 7.2 L30.7 26.9 L23 34.8 Z" fill="#4a80bd"/><path d="M14.9 25.4 L23 32.8 L23 34.8 L14.9 27.4 Z" fill="#4a80bd"/><path d="M19 18.4 L14.2 11.6 A6 6 0 1 1 23.8 11.6 Z" fill="#dc6040"/><circle cx="19" cy="8.8" r="2.1" fill="#f0f0f0"/></svg>
<svg class="ic" style="left:10px;top:180px" width="16" height="16" viewBox="0 0 16 16"><rect x="0" y="0" width="12" height="12" rx="1" fill="#3a4a6a"/><rect x="1.2" y="0.6" width="1" height="10.5" fill="#8a9ab8"/><rect x="3" y="1" width="6" height="3.9" fill="#e8f0fa"/><rect x="6" y="2" width="2" height="1.8" fill="#101010"/><rect x="3" y="7" width="6" height="5" fill="#fff"/><rect x="3" y="10" width="6" height="2" fill="#4a90d8"/><path d="M9 6.3 L13 6.3 L13 9.5 L15.5 9.5 L11 14.6 L6.5 9.5 L9 9.5 Z" fill="#7cc22a" stroke="#3d7a10" stroke-width="0.9"/></svg>
<svg class="ic" style="left:34px;top:518px" width="16" height="16" viewBox="0 0 16 16"><rect x="0" y="0" width="12" height="12" rx="1" fill="#3a4a6a"/><rect x="1.2" y="0.6" width="1" height="10.5" fill="#8a9ab8"/><rect x="3" y="1" width="6" height="3.9" fill="#e8f0fa"/><rect x="6" y="2" width="2" height="1.8" fill="#101010"/><rect x="3" y="7" width="6" height="5" fill="#fff"/><rect x="3" y="10" width="6" height="2" fill="#4a90d8"/><path d="M9 6.3 L13 6.3 L13 9.5 L15.5 9.5 L11 14.6 L6.5 9.5 L9 9.5 Z" fill="#7cc22a" stroke="#3d7a10" stroke-width="0.9"/></svg>
<svg class="ic" style="left:110px;top:176px" width="24" height="22" viewBox="0 0 24 22"><path d="M5 4 L17 4 L17 5 L12 11 L12 15 L10.6 16.7 L10 11 L5 5 Z" fill="#edc06a"/><path d="M14 13 L19 18 M19 13 L14 18" stroke="#dc5530" stroke-width="2.1" stroke-linecap="square"/></svg>
<svg class="ic" style="left:437px;top:176px" width="24" height="22" viewBox="0 0 24 22"><path d="M9.19 6.79 A4.9 4.9 0 0 1 16.88 10.37" fill="none" stroke="#3f7cbf" stroke-width="1.9"/><path d="M13.1 10.2 L20 10.2 L16.6 14.1 Z" fill="#3f7cbf"/><path d="M14.8 14.8 A4.9 4.9 0 0 1 7.12 11.23" fill="none" stroke="#3f7cbf" stroke-width="1.9"/><path d="M3.9 11.8 L10.9 11.8 L7.5 7.7 Z" fill="#3f7cbf"/></svg>
<svg class="ic" style="left:134px;top:514px" width="24" height="22" viewBox="0 0 24 22"><path d="M9.19 6.79 A4.9 4.9 0 0 1 16.88 10.37" fill="none" stroke="#3f7cbf" stroke-width="1.9"/><path d="M13.1 10.2 L20 10.2 L16.6 14.1 Z" fill="#3f7cbf"/><path d="M14.8 14.8 A4.9 4.9 0 0 1 7.12 11.23" fill="none" stroke="#3f7cbf" stroke-width="1.9"/><path d="M3.9 11.8 L10.9 11.8 L7.5 7.7 Z" fill="#3f7cbf"/></svg>
<svg class="ic" style="left:8px;top:517px" width="16" height="16" viewBox="0 0 16 16"><rect x="3.1" y="0.7" width="7.6" height="7" fill="#dfe5ef" stroke="#5a6aa8" stroke-width="1.1"/><rect x="0.6" y="4.6" width="13.4" height="8.4" rx="1.5" fill="#e4eaf6" stroke="#5a6aa8" stroke-width="1.1"/><rect x="2.3" y="6.2" width="9.5" height="2.1" fill="#34447a"/><rect x="3.1" y="10" width="7.6" height="4.6" fill="#fafcff" stroke="#5a6aa8" stroke-width="1.1"/><rect x="4" y="11.2" width="5.8" height="1.5" fill="#4a9ae0"/></svg>
<svg class="ic" style="left:62px;top:514px" width="24" height="22" viewBox="0 0 24 22"><path d="M7.1 3 H9.8 V5 H10.8 V9 H12.2 V5 H13.2 V3 H15.9 V5 H17 V8 H18 V10 H19 V16.8 H13.2 V13 H9.8 V16.8 H4 V10 H5 V8 H6 V5 H7.1 Z" fill="#4a80bd"/><rect x="5" y="11" width="1.1" height="4" fill="#b8cce4"/><rect x="16.9" y="11" width="1.1" height="4" fill="#b8cce4"/><rect x="7" y="6" width="1" height="2" fill="#a8c0dc"/><rect x="15" y="6" width="1" height="2" fill="#a8c0dc"/><rect x="11" y="10" width="1" height="1.1" fill="#e8eef8"/></svg>
<svg class="ic" style="left:516px;top:180px" width="14" height="14" viewBox="0 0 14 14"><circle cx="7" cy="7" r="6.2" fill="#8a8a8a"/><path d="M4.5 4.5 L9.5 9.5 M9.5 4.5 L4.5 9.5" stroke="#fff" stroke-width="1.3"/></svg>
<svg class="ic" style="left:534px;top:185px" width="12" height="3" viewBox="0 0 12 3"><rect x="1" y="0.5" width="1.5" height="1.5" fill="#b4b4b4"/><rect x="5" y="0.5" width="1.5" height="1.5" fill="#b4b4b4"/><rect x="9" y="0.5" width="1.5" height="1.5" fill="#b4b4b4"/></svg>
<svg class="ic" style="left:521px;top:8px" width="16" height="16" viewBox="0 0 16 16"><rect x="0.5" y="0.5" width="12" height="12" rx="1" fill="#c9d1dc" stroke="#3d4a60" stroke-width="1"/><rect x="3" y="1" width="6.5" height="4" fill="#f4f6fa" stroke="#3d4a60" stroke-width="0.6"/><rect x="6.2" y="2" width="2" height="1.8" fill="#101010"/><rect x="2.8" y="7.2" width="6.5" height="5" fill="#fff" stroke="#3d4a60" stroke-width="0.6"/><path d="M9 6.3 L13 6.3 L13 9.5 L15.5 9.5 L11 14.6 L6.5 9.5 L9 9.5 Z" fill="#7cc22a" stroke="#3d7a10" stroke-width="0.9"/></svg>
<svg class="ic" style="left:549px;top:7px" width="16" height="16" viewBox="0 0 16 16"><rect x="3.6" y="0.5" width="7.6" height="7" fill="#eef2f8" stroke="#8898c8" stroke-width="1"/><rect x="0.6" y="4.6" width="13.6" height="8" rx="1.5" fill="#eef2f8" stroke="#8898c8" stroke-width="1"/><rect x="2.3" y="5.3" width="10" height="2" fill="#3a4a7a"/><rect x="3.6" y="9" width="7.6" height="5.6" fill="#f4f7fc" stroke="#8898c8" stroke-width="1"/><rect x="4.5" y="10.3" width="5.8" height="1.6" fill="#4a9ae0"/></svg>
<svg class="ic" style="left:583px;top:11px" width="9" height="8" viewBox="0 0 9 8"><rect x="1" y="1" width="6" height="1.2" fill="#fff"/><path d="M1 3.5 L7 3.5 L4 6.8 Z" fill="#fff"/></svg>
<svg class="ic" style="left:150px;top:37px" width="14" height="14" viewBox="0 0 14 14"><circle cx="8.3" cy="5.5" r="3.6" fill="none" stroke="#707070" stroke-width="1.3"/><path d="M5.6 8.2 L1.8 12" stroke="#707070" stroke-width="1.8"/></svg>
<svg class="ic" style="left:5px;top:564px" width="12" height="14" viewBox="0 0 12 14"><ellipse cx="5.5" cy="4.8" rx="2.5" ry="1.7" fill="#f0f0f0" stroke="#505050" stroke-width="1.1"/><path d="M5.5 6.3 L5.5 10.5" stroke="#505050" stroke-width="1.1"/></svg>
<svg width="0" height="0" style="position:absolute"><defs>
<symbol id="ok" viewBox="0 0 16 16"><defs><linearGradient id="gok" x1="0" y1="0" x2="0" y2="1"><stop offset="0" stop-color="#62bd2c"/><stop offset="1" stop-color="#3f9a12"/></linearGradient></defs><circle cx="8" cy="8" r="8" fill="url(#gok)"/><path d="M2.4 7.9 L6.2 11.2 L13.2 4.3" fill="none" stroke="#fff" stroke-width="2.7"/></symbol>
<symbol id="er" viewBox="0 0 16 16"><circle cx="8" cy="8" r="8" fill="#d8441c"/><path d="M4 3.9 L12 12.1 M12 3.9 L4 12.1" fill="none" stroke="#fff" stroke-width="2.7"/></symbol>
<symbol id="clk" viewBox="0 0 16 16"><circle cx="3.7" cy="3.9" r="3.3" fill="#8d9ca8"/><circle cx="12.3" cy="3.9" r="3.3" fill="#8d9ca8"/><rect x="7.2" y="0" width="1.6" height="2.5" fill="#6d7c88"/><circle cx="3.3" cy="14.3" r="1.3" fill="#3d4d58"/><circle cx="12.7" cy="14.3" r="1.3" fill="#3d4d58"/><circle cx="8" cy="8.4" r="6.3" fill="#4a5c68"/><circle cx="8" cy="8.4" r="5" fill="#e6eaee"/><path d="M8 8.4 L12.5 12 A5 5 0 0 1 4 11.5 Z" fill="#d0d6dc"/><path d="M4.6 5.8 L8 8.6 L11.6 5.6" fill="none" stroke="#f7941d" stroke-width="1.4"/></symbol>
<symbol id="i" viewBox="0 0 16 16"><circle cx="8" cy="8" r="8" fill="#2f9fec"/><rect x="7.1" y="6.2" width="1.9" height="6.4" fill="#d4eafb"/><rect x="7.1" y="3.4" width="1.9" height="1.5" fill="#d4eafb"/></symbol>
<symbol id="w" viewBox="0 0 16 16"><path d="M8 1 L15.2 13.6 L0.8 13.6 Z" fill="#fcc84c" stroke="#454545" stroke-width="1.1" stroke-linejoin="round"/><rect x="7.2" y="4.4" width="1.6" height="5.2" fill="#555"/><rect x="7.2" y="11" width="1.6" height="1.4" fill="#8a7a50"/></symbol>
</defs></svg>
</div></body></html>
